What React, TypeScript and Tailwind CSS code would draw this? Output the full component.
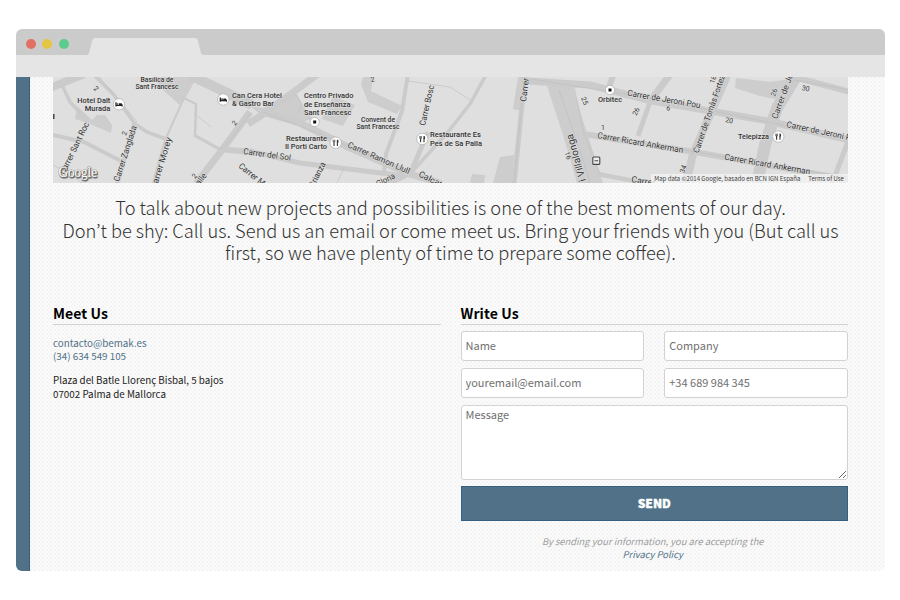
import React from "react";

type Label = {
  x: number;
  y: number;
  text: string;
  w?: number;
  rot?: number;
  size?: number;
  bold?: boolean;
  anchor?: "start" | "middle" | "end";
};

const labels: Label[] = [
  { x: 157, y: 81.5, text: "Basílica de", w: 33, anchor: "middle", bold: true, size: 6.8 },
  { x: 157, y: 89, text: "Sant Francesc", w: 43, anchor: "middle", bold: true, size: 6.8 },
  { x: 110.3, y: 102.5, text: "Hotel Dalt", w: 33, anchor: "end", bold: true },
  { x: 110.3, y: 110.7, text: "Murada", w: 25.5, anchor: "end", bold: true },
  { x: 232, y: 98, text: "Can Cera Hotel", w: 50, bold: true },
  { x: 232, y: 106.2, text: "& Gastro Bar", w: 42, bold: true },
  { x: 304, y: 98, text: "Centro Privado", w: 49.5, bold: true },
  { x: 304, y: 106.7, text: "de Enseñanza", w: 46.5, bold: true },
  { x: 304, y: 114.7, text: "Sant Francesc", w: 47.5, bold: true },
  { x: 378, y: 121.7, text: "Convent de", w: 34, anchor: "middle", bold: true, size: 6.8 },
  { x: 378, y: 129, text: "Sant Francesc", w: 43, anchor: "middle", bold: true, size: 6.8 },
  { x: 327, y: 140.7, text: "Restaurante", w: 41, anchor: "end", bold: true },
  { x: 327, y: 148.9, text: "Il Porti Carto", w: 42, anchor: "end", bold: true },
  { x: 430, y: 137.4, text: "Restaurante Es", w: 51, bold: true },
  { x: 430, y: 145.5, text: "Pes de Sa Palla", w: 52, bold: true },
  { x: 610, y: 102, text: "Orbitec", w: 24, anchor: "middle", bold: true },
  { x: 769, y: 139.3, text: "Telepizza", w: 31, anchor: "end", bold: true },
  { x: 64.5, y: 175, text: "Carrer Sant Roc", w: 57, rot: -64 },
  { x: 119, y: 182, text: "Carrer Zanglada", w: 58, rot: -72 },
  { x: 156, y: 190, text: "Carrer Morey", w: 54, rot: -73 },
  { x: 243, y: 154, text: "Carrer del Sol", w: 48, rot: 8 },
  { x: 238, y: 167, text: "Carrer Monti-sion", w: 62, rot: 39 },
  { x: 347, y: 147, text: "Carrer Ramon Llull", w: 67, rot: 24 },
  { x: 418, y: 176, text: "Calçat", w: 25, rot: 27 },
  { x: 314, y: 188, text: "Crianza", w: 27, rot: -64 },
  { x: 378, y: 187, text: "Gloria", w: 20, rot: -27 },
  { x: 196, y: 190, text: "Calle", w: 18, rot: -52 },
  { x: 425, y: 126, text: "Carrer Bosc", w: 41, rot: -77 },
  { x: 526, y: 102, text: "Carrer", w: 24, rot: -83 },
  { x: 586, y: 180.5, text: "i Villalonga", w: 49, rot: -106, size: 10 },
  { x: 627, y: 95.5, text: "Carrer de Jeroni Pou", w: 74, rot: 10 },
  { x: 597, y: 138, text: "Carrer Ricard Ankerman", w: 87, rot: 10 },
  { x: 698.5, y: 153.5, text: "Carrer de Tomàs Forteza", w: 86, rot: -71 },
  { x: 777, y: 119.5, text: "Carrer de Jeroni", w: 62, rot: -70 },
  { x: 786, y: 127, text: "Carrer de Jeroni Pou", w: 75, rot: 12 },
  { x: 724, y: 159.5, text: "Carrer Ricard Ankerman", w: 87, rot: 10 },
  { x: 631, y: 182, text: "Carrer", w: 24, rot: 9 },
  { x: 93, y: 89, text: "2", rot: 45, size: 7 },
  { x: 126, y: 136, text: "2", rot: -70, size: 7 },
  { x: 235, y: 126, text: "2", rot: -50, size: 7 },
  { x: 195, y: 179, text: "2", rot: -50, size: 7 },
  { x: 371, y: 82, text: "2", rot: -10, size: 7 },
  { x: 581, y: 98, text: "25", rot: 68, size: 7 },
  { x: 636.5, y: 116, text: "26", rot: -65, size: 7 },
  { x: 601, y: 130, text: "1", size: 7 },
  { x: 564.5, y: 152.5, text: "16", rot: 72, size: 7 },
  { x: 666, y: 110, text: "6", rot: 10, size: 7 },
  { x: 714, y: 84, text: "18", rot: -70, size: 7 },
  { x: 725, y: 122, text: "20", rot: 10, size: 7 },
  { x: 775, y: 97, text: "26", rot: -70, size: 7 },
  { x: 801.5, y: 90, text: "30", rot: 10, size: 7 },
  { x: 684, y: 173.5, text: "34", rot: -70, size: 7 },
];

const roads: [string, number][] = [
  ["M50 88 L84 74", 8],
  ["M60 81 L70 102 L87 120", 3.5],
  ["M95 76 L113 94 L135 124 L147 132 L166 139", 3.5],
  ["M135 122 L117 184", 4.5],
  ["M166 138 L153 184", 3],
  ["M166 138 L184 98", 2],
  ["M53 135 L84 142 L121 161", 4],
  ["M190 75 L252 105", 10],
  ["M182 97 L196 104 L195 136 L222 151 L262 155", 2.5],
  ["M250 112 L222 150 L196 184", 7],
  ["M318 74 L262 115 L248 124", 7],
  ["M262 112 L300 123 L350 148 L410 174 L440 183", 7],
  ["M222 149 L250 151 L300 163 L405 176", 5],
  ["M408 74 L402 111 L386 154 L384 172", 4],
  ["M428 132 L411 172", 5],
  ["M486 75 L470 104 L448 132 L410 174", 3.5],
  ["M413 172 L388 184", 5],
  ["M525 76 L514 184", 5],
  ["M528 81 L590 85 L652 101 L768 121 L850 140", 7],
  ["M613 75 L609 88", 6],
  ["M650 102 L638 136", 5],
  ["M672 72 L651 100", 7],
  ["M584 134 L650 145 L695 152 L850 180", 6],
  ["M598 174 L650 184", 4.5],
  ["M727 76 L693 154 L686 184", 8],
  ["M797 75 L777 108 L765 145 L757 184", 12],
  ["M790 76 L850 92", 6],
  ["M850 136 L832 184", 5],
];

const blocks = [
  "77,106 75,119 90,124 111,133 112,125 105,115 97,115 92,120",
  "153,77 197,77 181,106 163,90",
  "250,106 263,108 278,99 297,94 302,104 313,119 300,122 262,116",
  "333,96 355,105 343,126 322,119",
  "363,77 373,77 371,91 402,106 397,114 368,102 361,84",
  "518,77 528,77 522,111 513,109",
  "500,157 514,155 512,183 493,183",
  "472,174 485,175 484,183 470,183",
  "547,86 573,86 582,118 590,142 603,183 577,183 563,135",
  "736,78 770,82 790,79 780,100 760,96 735,88",
];

const lines = [
  "M99 77 L115 95 L137 122",
  "M195 114 L211 127",
  "M196 135 L222 149",
  "M251 112 L223 149",
  "M408 81 L450 87",
  "M344 168 L337 183",
  "M450 87 L470 100",
  "M574 86 L584 134 L600 174",
  "M559 90 L583 160 L590 183",
  "M531 79 L650 98 L850 139",
  "M600 136 L850 178",
  "M522 102 L514 183",
  "M724 77 L692 155",
  "M794 80 L850 90",
  "M295 94 L302 104 L298 113",
  "M263 112 L318 133 L410 173",
  "M53 165 L72 175 L82 183",
];

function Pin({ x, y, kind }: { x: number; y: number; kind: "bed" | "fork" | "dot" }) {
  return (
    <g transform={`translate(${x} ${y})`}>
      <circle r={kind === "dot" ? 4.6 : 5.7} fill="#fff" stroke="#aaa" strokeWidth="0.7" />
      {kind === "bed" && (
        <path d="M-3 -2 V2.2 M3 2.2 V0 M-3 1 H3 M-1.8 -.5 H-.7 M0 -.3 H2.8" stroke="#222" strokeWidth="1.3" fill="none" />
      )}
      {kind === "fork" && (
        <g fill="none" stroke="#333">
          <path d="M-1.7 -.5 V3.2 M1.7 -.5 V3.2" strokeWidth="1.1" />
          <path d="M-2.6 -3 V-.6 H-.8 V-3 M-1.7 -3 V-.6" strokeWidth="0.6" />
          <path d="M1.7 -3 V0 M2.2 -2.6 V0" strokeWidth="1.1" />
        </g>
      )}
      {kind === "dot" && <rect x="-1.5" y="-1.5" width="3" height="3" fill="#111" />}
    </g>
  );
}

function CityMap() {
  return (
    <svg className="block h-[106px] w-full shrink-0" viewBox="53 77 795 106" preserveAspectRatio="none">
      <rect x="53" y="77" width="795" height="106" fill="#dfdfdf" />
      {blocks.map((p) => (
        <polygon key={p} points={p} fill="#cdcdcd" />
      ))}
      {roads.map(([d, w]) => (
        <path key={d} d={d} stroke="#cbcbcb" strokeWidth={w} fill="none" strokeLinejoin="round" />
      ))}
      {lines.map((d) => (
        <path key={d} d={d} stroke="#bdbdbd" strokeWidth="0.6" fill="none" />
      ))}
      <g fontFamily="Roboto, 'Liberation Sans', sans-serif" fill="#333" stroke="#e4e4e4" strokeWidth="1" paintOrder="stroke" strokeLinejoin="round">
        {labels.map((l, i) => (
          <text
            key={i}
            transform={`translate(${l.x} ${l.y}) rotate(${l.rot ?? 0})`}
            fontSize={l.size ?? (l.bold ? 7.6 : 8.6)}
            fontWeight={l.bold ? 500 : 400}
            textAnchor={l.anchor ?? "start"}
            textLength={l.w}
            lengthAdjust="spacingAndGlyphs"
          >
            {l.text}
          </text>
        ))}
      </g>
      <rect x="53" y="114" width="1.5" height="5" fill="#444" />
      <Pin x={119} y={104.3} kind="bed" />
      <Pin x={223.3} y={99.5} kind="bed" />
      <Pin x={314.7} y={122} kind="dot" />
      <Pin x={335.7} y={142.7} kind="fork" />
      <Pin x={422.3} y={139} kind="fork" />
      <Pin x={610} y={90} kind="dot" />
      <Pin x={778.3} y={136.6} kind="fork" />
      <rect x="592.8" y="157" width="7" height="7.4" rx="1" fill="#eee" stroke="#444" strokeWidth="1.1" />
      <path d="M594.5 160.8 H598.2" stroke="#444" strokeWidth="1" />
      <text
        className="[text-shadow:0.8px_0.8px_0.8px_#666]"
        x="58.5"
        y="177"
        fontFamily="'Liberation Serif', serif"
        fontSize="15"
        textLength="38.5"
        lengthAdjust="spacingAndGlyphs"
        fill="#fff"
        stroke="#a6a6a6"
        strokeWidth="1.1"
        paintOrder="stroke"
      >
        Google
      </text>
      <rect x="651" y="174" width="197" height="9" fill="#f3f3f3" fillOpacity="0.8" />
      <g fontFamily="'Noto Sans CJK KR', sans-serif" fontSize="6.2" fill="#3a3a3a">
        <text x="654.3" y="181" textLength="146" lengthAdjust="spacingAndGlyphs">Map data ©2014 Google, basado en BCN IGN España</text>
        <text x="808.3" y="181" textLength="35.5" lengthAdjust="spacingAndGlyphs">Terms of Use</text>
      </g>
    </svg>
  );
}

const field =
  "block w-full rounded-[3px] border border-[#d2d2d2] bg-white px-1 text-[11px] text-[#555] placeholder:text-[#707070] placeholder:opacity-100 outline-none";

export default function App() {
  return (
    <div className="h-[600px] w-[900px] overflow-hidden bg-white pl-4 pt-[29px] font-['Noto_Sans_CJK_KR','Noto_Sans',sans-serif]">
      <div className="flex h-[542px] w-[869px] flex-col overflow-hidden rounded-[6px]">
        <header className="shrink-0">
          <div className="flex h-[26px] items-end bg-[#cbcbcb]">
            <div className="flex h-[23px] w-[71px] gap-[6.5px] pl-[9.5px] pt-[6.5px]">
              <span className="size-[10px] rounded-full bg-[#e16f64]" />
              <span className="size-[10px] rounded-full bg-[#e5c544]" />
              <span className="size-[10px] rounded-full bg-[#5bcc8b]" />
            </div>
            <svg className="block h-[17px] w-[116px]" viewBox="0 0 116 17">
              <path d="M0 17 Q1.5 17 2 15 L5 3 Q5.7 0 8 0 H108 Q110.3 0 111 3 L114 15 Q114.5 17 116 17 Z" fill="#e5e5e5" />
            </svg>
          </div>
          <div className="h-[22px] bg-[#e5e5e5]" />
        </header>
        <div className="flex min-h-0 flex-1">
          <aside className="w-[14px] shrink-0 border-r border-[#356080] bg-[#507188]" />
          <main className="flex min-w-0 flex-1 flex-col bg-[#fbfbfb] bg-[radial-gradient(circle_at_1px_1px,#f3f3f3_0.7px,transparent_1px),radial-gradient(circle_at_3px_3px,#f6f6f6_0.7px,transparent_1px)] bg-size-[4px_4px] pl-[23px] pr-[37px]">
            <CityMap />
            <p className="mt-[13px] h-[68px] whitespace-nowrap text-center text-[18.25px] font-light leading-[22.5px] text-[#333]">
              To talk about new projects and possibilities is one of the best moments of our day.
              <br />
              Don’t be shy: Call us. Send us an email or come meet us. Bring your friends with you (But call us
              <br />
              first, so we have plenty of time to prepare some coffee).
            </p>
            <div className="mt-[38.5px] grid grid-cols-2 gap-5">
              <section>
                <h2 className="h-[22px] border-b border-[#d2d2d2] text-[14px] font-bold leading-[20.5px] tracking-[0.1px] text-black">Meet Us</h2>
                <div className="pt-[12px] text-[9.8px] leading-[13.7px] text-[#222]">
                  <p className="text-[#507188]">
                    contacto@bemak.es
                    <br />
                    (34) 634 549 105
                  </p>
                  <p className="mt-[10.5px]">
                    Plaza del Batle Llorenç Bisbal, 5 bajos
                    <br />
                    07002 Palma de Mallorca
                  </p>
                </div>
              </section>
              <section>
                <h2 className="h-[22px] border-b border-[#d2d2d2] text-[14px] font-bold leading-[20.5px] tracking-[0.1px] text-black">Write Us</h2>
                <form className="pt-[6px]" onSubmit={(e) => e.preventDefault()}>
                  <div className="grid grid-cols-2 gap-x-5 gap-y-[7px]">
                    <input className={`${field} h-[30px] pb-[2px]`} placeholder="Name" />
                    <input className={`${field} h-[30px] pb-[2px]`} placeholder="Company" />
                    <input className={`${field} h-[30px] pb-[2px]`} placeholder="youremail@email.com" />
                    <input className={`${field} h-[30px] pb-[2px]`} placeholder="+34 689 984 345" />
                  </div>
                  <textarea className={`${field} mt-[7px] h-[75px] resize pt-px leading-[15px]`} placeholder="Message" />
                  <button className="mt-[6px] block h-[35px] w-full border border-[#356080] bg-[#507188] text-[12px] font-black leading-[32px] text-white [-webkit-text-stroke:0.4px_white]">SEND</button>
                </form>
                <p className="pt-[14px] pr-[3px] text-center text-[9.4px] italic leading-[13.7px] text-[#9c9c9c]">
                  By sending your information, you are accepting the
                  <br />
                  <a className="text-[#507188]">Privacy Policy</a>
                </p>
              </section>
            </div>
          </main>
        </div>
      </div>
    </div>
  );
}
